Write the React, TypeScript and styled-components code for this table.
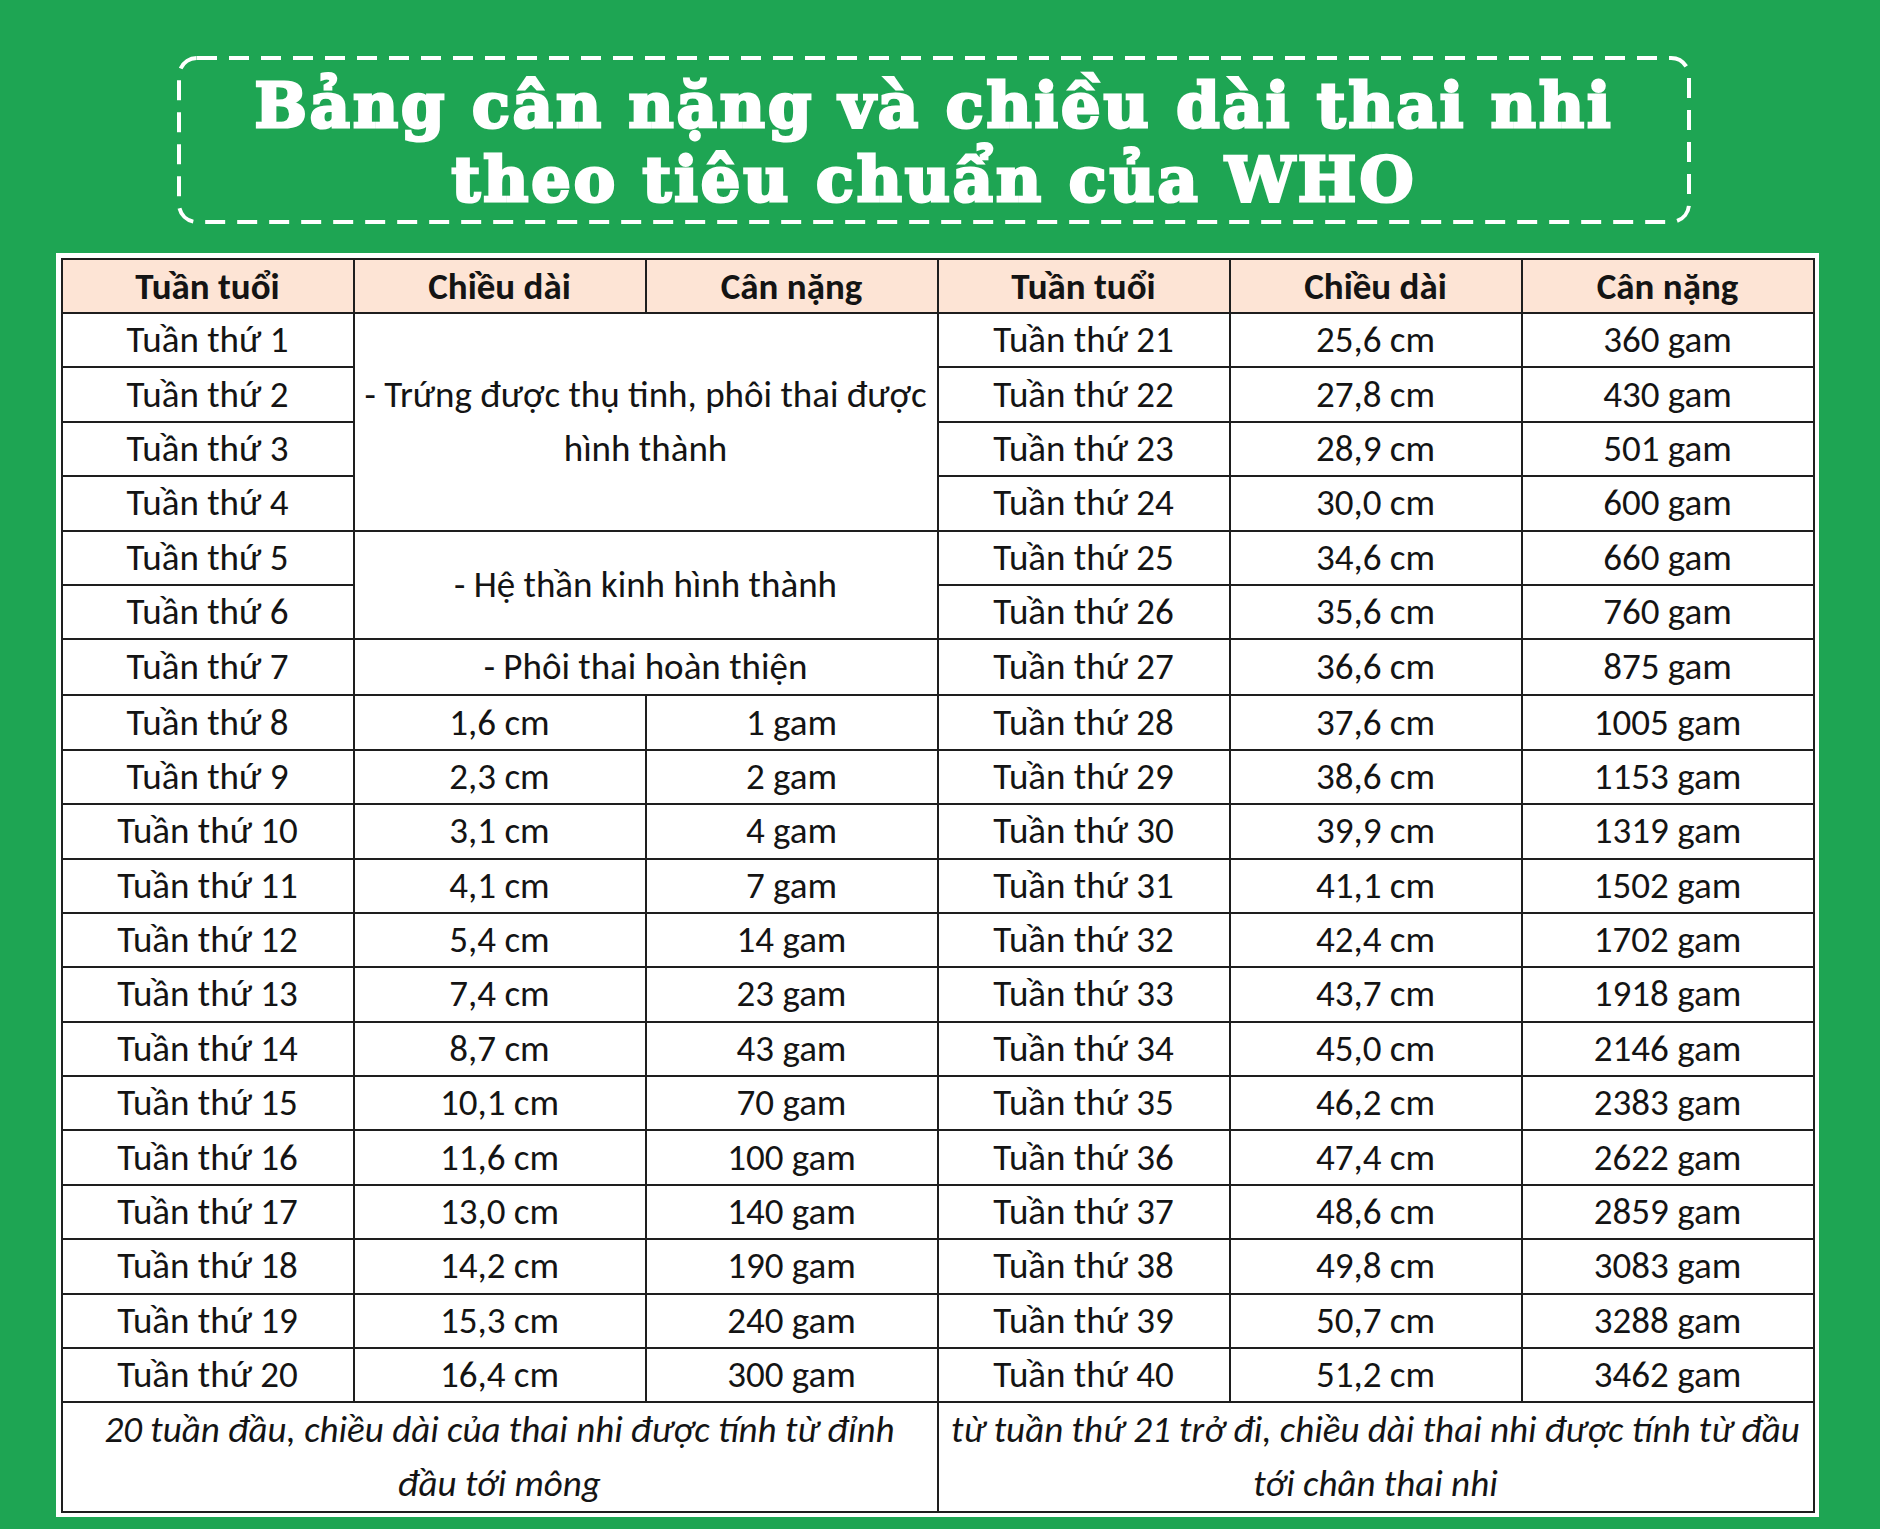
import styled, { createGlobalStyle } from "styled-components";

const GlobalStyle = createGlobalStyle`
  html, body {
    margin: 0;
    padding: 0;
    background: #1ea553;
  }
`;

type Row = [string, string, string];

const firstHalf: Row[] = [
  ["Tuần thứ 8", "1,6 cm", "1 gam"],
  ["Tuần thứ 9", "2,3 cm", "2 gam"],
  ["Tuần thứ 10", "3,1 cm", "4 gam"],
  ["Tuần thứ 11", "4,1 cm", "7 gam"],
  ["Tuần thứ 12", "5,4 cm", "14 gam"],
  ["Tuần thứ 13", "7,4 cm", "23 gam"],
  ["Tuần thứ 14", "8,7 cm", "43 gam"],
  ["Tuần thứ 15", "10,1 cm", "70 gam"],
  ["Tuần thứ 16", "11,6 cm", "100 gam"],
  ["Tuần thứ 17", "13,0 cm", "140 gam"],
  ["Tuần thứ 18", "14,2 cm", "190 gam"],
  ["Tuần thứ 19", "15,3 cm", "240 gam"],
  ["Tuần thứ 20", "16,4 cm", "300 gam"],
];

const secondHalf: Row[] = [
  ["Tuần thứ 21", "25,6 cm", "360 gam"],
  ["Tuần thứ 22", "27,8 cm", "430 gam"],
  ["Tuần thứ 23", "28,9 cm", "501 gam"],
  ["Tuần thứ 24", "30,0 cm", "600 gam"],
  ["Tuần thứ 25", "34,6 cm", "660 gam"],
  ["Tuần thứ 26", "35,6 cm", "760 gam"],
  ["Tuần thứ 27", "36,6 cm", "875 gam"],
  ["Tuần thứ 28", "37,6 cm", "1005 gam"],
  ["Tuần thứ 29", "38,6 cm", "1153 gam"],
  ["Tuần thứ 30", "39,9 cm", "1319 gam"],
  ["Tuần thứ 31", "41,1 cm", "1502 gam"],
  ["Tuần thứ 32", "42,4 cm", "1702 gam"],
  ["Tuần thứ 33", "43,7 cm", "1918 gam"],
  ["Tuần thứ 34", "45,0 cm", "2146 gam"],
  ["Tuần thứ 35", "46,2 cm", "2383 gam"],
  ["Tuần thứ 36", "47,4 cm", "2622 gam"],
  ["Tuần thứ 37", "48,6 cm", "2859 gam"],
  ["Tuần thứ 38", "49,8 cm", "3083 gam"],
  ["Tuần thứ 39", "50,7 cm", "3288 gam"],
  ["Tuần thứ 40", "51,2 cm", "3462 gam"],
];

// merged notes for the first seven weeks
const earlyNotes: Record<number, { text: string; span: number }> = {
  0: { text: "- Trứng được thụ tinh, phôi thai được\nhình thành", span: 4 },
  4: { text: "- Hệ thần kinh hình thành", span: 2 },
  6: { text: "- Phôi thai hoàn thiện", span: 1 },
};

export default function App() {
  return (
    <Page>
      <GlobalStyle />
      <TitleBox>
        <DashFrame width="100%" height="100%">
          <rect
            x="2"
            y="2"
            width="calc(100% - 4px)"
            height="calc(100% - 4px)"
            rx="18"
            ry="18"
            fill="none"
            stroke="#fff"
            strokeWidth="4"
            strokeDasharray="20 12"
          />
        </DashFrame>
        <Title>
          Bảng cân nặng và chiều dài thai nhi
          <br />
          theo tiêu chuẩn của WHO
        </Title>
      </TitleBox>

      <TableFrame>
        <Table>
          <colgroup>
            {Array.from({ length: 6 }).map((_, i) => (
              <col key={i} style={{ width: 292 }} />
            ))}
          </colgroup>
          <thead>
            <HeadRow>
              <Th>Tuần tuổi</Th>
              <Th>Chiều dài</Th>
              <Th>Cân nặng</Th>
              <Th>Tuần tuổi</Th>
              <Th>Chiều dài</Th>
              <Th>Cân nặng</Th>
            </HeadRow>
          </thead>
          <tbody>
            {secondHalf.map((right, i) => {
              const left = i >= 7 ? firstHalf[i - 7] : null;
              const note = earlyNotes[i];
              return (
                <BodyRow key={i}>
                  <Td>{left ? left[0] : `Tuần thứ ${i + 1}`}</Td>
                  {left ? (
                    <>
                      <Td>{left[1]}</Td>
                      <Td>{left[2]}</Td>
                    </>
                  ) : note ? (
                    <NoteCell colSpan={2} rowSpan={note.span}>
                      {note.text}
                    </NoteCell>
                  ) : null}
                  <Td>{right[0]}</Td>
                  <Td>{right[1]}</Td>
                  <Td>{right[2]}</Td>
                </BodyRow>
              );
            })}
            <FootRow>
              <FootCell colSpan={3}>
                20 tuần đầu, chiều dài của thai nhi được tính từ đỉnh
                <br />
                đầu tới mông
              </FootCell>
              <FootCell colSpan={3}>
                từ tuần thứ 21 trở đi, chiều dài thai nhi được tính từ đầu
                <br />
                tới chân thai nhi
              </FootCell>
            </FootRow>
          </tbody>
        </Table>
      </TableFrame>
    </Page>
  );
}

const Page = styled.div`
  width: 1880px;
  height: 1529px;
  box-sizing: border-box;
  padding-top: 56px;
  display: flex;
  flex-direction: column;
  align-items: center;
  background: #1ea553;
`;

const TitleBox = styled.div`
  position: relative;
  width: 1514px;
  height: 168px;
  box-sizing: border-box;
  margin-right: 12px;
  padding-top: 6px;
  display: flex;
  align-items: center;
  justify-content: center;
`;

const DashFrame = styled.svg`
  position: absolute;
  inset: 0;
  pointer-events: none;
`;

const Title = styled.h1`
  margin: 0;
  text-align: center;
  color: #fff;
  font-family: "DejaVu Serif", "Liberation Serif", serif;
  font-weight: 700;
  font-size: 62px;
  line-height: 74px;
  -webkit-text-stroke: 3px #fff;
  letter-spacing: 3px;
  white-space: nowrap;
`;

const TableFrame = styled.div`
  margin-top: 29px;
  margin-right: 6px;
  padding: 5px 4px 4px 5px;
  background: #fff;
`;

const Table = styled.table`
  border-collapse: collapse;
  table-layout: fixed;
  width: 1754px;
  font-family: "Carlito", "Lato", "Noto Sans", sans-serif;
  color: #141414;
  font-size: 37px;
  border: 2.5px solid #1e1e1e;
`;

const HeadRow = styled.tr`
  height: 54px;
  background: #fde4d5;
`;

const BodyRow = styled.tr`
  height: 54.4px;
`;

const FootRow = styled.tr`
  height: 110px;
`;

const Th = styled.th`
  border: 2.5px solid #1e1e1e;
  padding: 0;
  font-weight: 700;
  font-size: 37px;
  text-align: center;
  vertical-align: middle;
`;

const Td = styled.td`
  border: 2.5px solid #1e1e1e;
  padding: 0;
  text-align: center;
  vertical-align: middle;
  white-space: nowrap;
  line-height: 48px;
`;

const NoteCell = styled.td`
  border: 2.5px solid #1e1e1e;
  padding: 0 2px;
  text-align: center;
  vertical-align: middle;
  line-height: 54px;
  white-space: pre-line;
`;

const FootCell = styled.td`
  border: 2.5px solid #1e1e1e;
  padding: 0 4px;
  text-align: center;
  vertical-align: middle;
  font-style: italic;
  line-height: 54px;
  white-space: nowrap;
`;
